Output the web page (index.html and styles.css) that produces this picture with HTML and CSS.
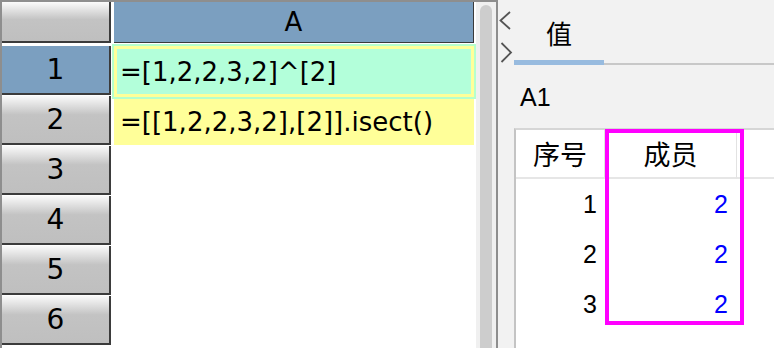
FILE: index.html
```html
<!DOCTYPE html>
<html lang="zh">
  <head>
    <meta charset="UTF-8" />
    <title>网格</title>
    <link rel="stylesheet" href="styles.css">
  </head>
  <body>
    <div class="app">
      <div class="sheet">
        <div class="grid">
          <div class="corner"></div>
          <div class="colhead">A</div>

          <div class="rowhead sel">1</div>
          <div class="cell cur">=[1,2,2,3,2]^[2]</div>

          <div class="rowhead">2</div>
          <div class="cell expr">=[[1,2,2,3,2],[2]].isect()</div>

          <div class="rowhead">3</div>
          <div class="cell"></div>

          <div class="rowhead">4</div>
          <div class="cell"></div>

          <div class="rowhead">5</div>
          <div class="cell"></div>

          <div class="rowhead">6</div>
          <div class="cell"></div>
        </div>
        <div class="vscroll"><div class="thumb"></div></div>
      </div>

      <div class="panel">
        <div class="toggles">
          <svg width="16" height="70" viewBox="0 0 16 70">
            <polyline points="12,12 2.5,20.5 12,29" fill="none" stroke="#555" stroke-width="1.8" />
            <polyline points="3.5,43 13,52.5 3.5,62" fill="none" stroke="#555" stroke-width="1.8" />
          </svg>
        </div>
        <div class="main">
          <div class="tabs">
            <div class="tab active">值</div>
            <div class="tab-rest"></div>
          </div>
          <div class="cellname">A1</div>
          <div class="result">
            <table>
              <colgroup>
                <col class="c-idx" />
                <col class="c-val" />
                <col />
              </colgroup>
              <thead>
                <tr>
                  <th>序号</th>
                  <th>成员</th>
                  <th></th>
                </tr>
              </thead>
              <tbody>
                <tr><td>1</td><td class="num">2</td><td></td></tr>
                <tr><td>2</td><td class="num">2</td><td></td></tr>
                <tr><td>3</td><td class="num">2</td><td></td></tr>
              </tbody>
            </table>
            <div class="mark"></div>
          </div>
        </div>
      </div>
    </div>
  </body>
</html>
```

FILE: styles.css
```css
* {
  box-sizing: border-box;
}
body {
  margin: 0;
  background: #fff;
  overflow: hidden;
}
.app {
  display: flex;
  width: 774px;
  height: 348px;
}

/* left: spreadsheet */
.sheet {
  display: flex;
  width: 498px;
  height: 348px;
  border-top: 2px solid #8e8e8e;
  border-left: 2px solid #8e8e8e;
  border-right: 2px solid #8e8e8e;
  background: #fff;
}
.grid {
  width: 474px;
  display: grid;
  grid-template-columns: 109px 360px;
  grid-template-rows: 44px repeat(6, 50px);
  column-gap: 3px;
  align-content: start;
  font-family: "DejaVu Sans", sans-serif;
  color: #000;
}
.corner {
  height: 41px;
  background: linear-gradient(#fbfbfb, #c3c3c3 45%, #bfbfbf);
  border-right: 2px solid #3b3b3b;
  border-bottom: 2px solid #3b3b3b;
}
.colhead {
  height: 41px;
  background: #7b9fc0;
  border-right: 1px solid #3b3b3b;
  border-bottom: 1px solid #3b3b3b;
  display: flex;
  align-items: center;
  justify-content: center;
  font-size: 26px;
}
.rowhead {
  height: 49px;
  background: linear-gradient(#fafafa, #c3c3c3 40%, #bfbfbf);
  border-right: 2px solid #3b3b3b;
  border-bottom: 2px solid #3b3b3b;
  display: flex;
  align-items: center;
  justify-content: center;
  font-size: 28px;
}
.rowhead.sel {
  background: #7b9fc0;
}
.cell {
  height: 49px;
  padding-left: 6px;
  display: flex;
  align-items: center;
  font-size: 26px;
  white-space: nowrap;
}
.cell.cur {
  position: relative;
  z-index: 1;
  height: 51px;
  padding-left: 3px;
  background: #b3ffda;
  border: 3px solid #ffff99;
  outline: 2px solid #b6ffcc;
}
.cell.expr {
  height: 46px;
  margin-top: 3px;
  background: #ffff99;
}
.vscroll {
  width: 20px;
  background: #f0f0f0;
  padding: 3px 4px 0;
}
.thumb {
  width: 12px;
  height: 100%;
  background: #cdcdcd;
  border-radius: 6px 6px 0 0;
}

/* right: value panel */
.panel {
  flex: 1;
  display: flex;
  background: #f2f2f2;
  font-family: "Liberation Sans", "Noto Sans CJK SC", sans-serif;
}
.toggles {
  width: 16px;
}
.toggles svg {
  display: block;
}
.main {
  flex: 1;
  display: flex;
  flex-direction: column;
}
.tabs {
  display: flex;
  height: 65px;
}
.tab {
  width: 90px;
  padding-top: 20px;
  text-align: center;
  font-family: "Noto Sans CJK SC", sans-serif;
  font-size: 26px;
  line-height: 26px;
  border-bottom: 5px solid #98bbdf;
}
.tab-rest {
  flex: 1;
  border-bottom: 2px solid #c8c8c8;
}
.cellname {
  height: 63px;
  padding: 20px 0 0 6px;
  font-size: 25px;
  line-height: 25px;
}
.result {
  position: relative;
  flex: 1;
  background: #fff;
  border-top: 2px solid #d6d6d6;
  border-left: 2px solid #c4c4c4;
}
.result table {
  width: 100%;
  table-layout: fixed;
  border-collapse: separate;
  border-spacing: 0;
}
.c-idx {
  width: 89px;
}
.c-val {
  width: 132px;
}
.result th {
  height: 49px;
  padding: 0;
  font-family: "Noto Sans CJK SC", sans-serif;
  font-size: 27px;
  font-weight: normal;
  border-bottom: 2px solid #e6e6e6;
  border-right: 1px solid #e2e2e2;
}
.result th:last-child {
  border-right: none;
}
.result td {
  height: 50px;
  padding: 0 8px 0 0;
  text-align: right;
  font-size: 25px;
}
.result td.num {
  color: #0000ff;
  padding-right: 9px;
}
.mark {
  position: absolute;
  left: 89px;
  top: -1px;
  width: 139px;
  height: 196px;
  border: 4px solid #ff00ff;
}
```
